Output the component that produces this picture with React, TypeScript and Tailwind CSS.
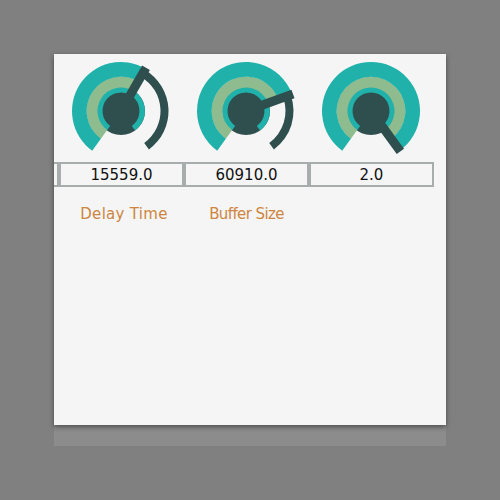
import React from "react";

const TEAL = "#20b2aa";
const GREEN = "#8fbc8f";
const DARK = "#2f4f4f";

const START = -144;
const END = 144;

function pt(cx: number, cy: number, r: number, deg: number) {
  const a = (deg * Math.PI) / 180;
  return [cx + r * Math.sin(a), cy - r * Math.cos(a)];
}

function sector(cx: number, cy: number, rIn: number, rOut: number, a0: number, a1: number) {
  const large = a1 - a0 > 180 ? 1 : 0;
  const [x0, y0] = pt(cx, cy, rOut, a0);
  const [x1, y1] = pt(cx, cy, rOut, a1);
  const [x2, y2] = pt(cx, cy, rIn, a1);
  const [x3, y3] = pt(cx, cy, rIn, a0);
  return `M${x0} ${y0} A${rOut} ${rOut} 0 ${large} 1 ${x1} ${y1} L${x2} ${y2} A${rIn} ${rIn} 0 ${large} 0 ${x3} ${y3} Z`;
}

function Knob({ angle }: { angle: number }) {
  const cx = 62;
  const cy = 53;
  const [px, py] = pt(cx, cy, 50, angle);
  return (
    <svg width="125" height="104" viewBox="0 0 125 104" className="block">
      <circle cx={cx} cy={cy} r={24} fill={DARK} />
      <path d={sector(cx, cy, 18.5, 24, START, END)} fill={TEAL} />
      <path d={sector(cx, cy, 23.5, 34.5, START, angle)} fill={GREEN} />
      <path d={sector(cx, cy, 34.3, 49, START, angle)} fill={TEAL} />
      {angle < END && <path d={sector(cx, cy, 39.5, 47.5, angle, END)} fill={DARK} />}
      <line x1={cx} y1={cy} x2={px} y2={py} stroke={DARK} strokeWidth={9} />
    </svg>
  );
}

const cols = [
  { angle: 0, value: "", label: "", track: "" },
  { angle: 30, value: "15559.0", label: "Delay Time", track: "tracking-[0.3px] pl-[5px]" },
  { angle: 70, value: "60910.0", label: "Buffer Size", track: "tracking-[-0.6px]" },
  { angle: 144, value: "2.0", label: "", track: "" },
];

export default function App() {
  return (
    <div className="w-[500px] h-[500px] bg-[#808080] pt-[54px] pl-[54px]" style={{ fontFamily: '"DejaVu Sans", sans-serif' }}>
      <div className="w-[392px]">
        <div className="h-[371px] bg-[#f5f5f5] overflow-hidden shadow-[0_2px_5px_rgba(0,0,0,0.45)] relative z-10">
          <div className="flex ml-[-120px] pt-[4px]">
            {cols.map((c, i) => (
              <div key={i} className="w-[125px] shrink-0 flex flex-col">
                <Knob angle={c.angle} />
                <div className="h-[25px] border-2 border-[#a7adad] flex items-center justify-center text-[15px] text-[#111] leading-none pt-[1px]">
                  {c.value}
                </div>
                <div className={`mt-[18px] h-[18px] text-center text-[15px] leading-[18px] text-[#cd853f] ${c.track}`}>
                  {c.label}
                </div>
              </div>
            ))}
          </div>
        </div>
        <div className="h-[21px] bg-[#8c8c8c]" />
      </div>
    </div>
  );
}
